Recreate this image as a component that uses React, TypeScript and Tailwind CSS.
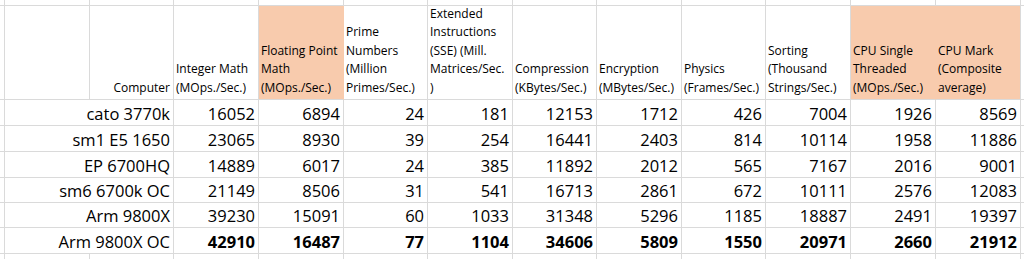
import React from "react";

const headers: { lines: string[]; hl?: boolean }[] = [
  { lines: ["Integer Math", "(MOps./Sec.)"] },
  { lines: ["Floating Point", "Math", "(MOps./Sec.)"], hl: true },
  { lines: ["Prime", "Numbers", "(Million", "Primes/Sec.)"] },
  { lines: ["Extended", "Instructions", "(SSE) (Mill.", "Matrices/Sec.", ")"] },
  { lines: ["Compression", "(KBytes/Sec.)"] },
  { lines: ["Encryption", "(MBytes/Sec.)"] },
  { lines: ["Physics", "(Frames/Sec.)"] },
  { lines: ["Sorting", "(Thousand", "Strings/Sec.)"] },
  { lines: ["CPU Single", "Threaded", "(MOps./Sec.)"], hl: true },
  { lines: ["CPU Mark", "(Composite", "average)"], hl: true },
];

const rows: { name: string; vals: number[]; bold?: boolean }[] = [
  { name: "cato 3770k", vals: [16052, 6894, 24, 181, 12153, 1712, 426, 7004, 1926, 8569] },
  { name: "sm1 E5 1650", vals: [23065, 8930, 39, 254, 16441, 2403, 814, 10114, 1958, 11886] },
  { name: "EP 6700HQ", vals: [14889, 6017, 24, 385, 11892, 2012, 565, 7167, 2016, 9001] },
  { name: "sm6 6700k OC", vals: [21149, 8506, 31, 541, 16713, 2861, 672, 10111, 2576, 12083] },
  { name: "Arm 9800X", vals: [39230, 15091, 60, 1033, 31348, 5296, 1185, 18887, 2491, 19397] },
  { name: "Arm 9800X OC", vals: [42910, 16487, 77, 1104, 34606, 5809, 1550, 20971, 2660, 21912], bold: true },
];

const line = "border-r border-b border-[#dadada]";

export default function App() {
  return (
    <div className="w-[1024px] h-[259px] overflow-hidden bg-white text-black font-['Open_Sans',sans-serif]">
      <div className="grid grid-cols-[5px_85px_84px_85px_85px_84px_85px_84px_85px_84px_85px_85px_85px_3px] grid-rows-[6px_94px_26px_26px_26px_25px_25px_26px_5px]">
        {/* partial row above */}
        {Array.from({ length: 14 }).map((_, i) => (
          <div key={"t" + i} className={i == 13 ? "border-b border-[#dadada]" : line} />
        ))}

        {/* header row */}
        <div className={line} />
        <div className={line} />
        <div className={`${line} flex items-end justify-end pr-[3px] pb-[2px] text-[12px] leading-[18.4px] whitespace-nowrap`}>
          Computer
        </div>
        {headers.map((h, i) => (
          <div
            key={"h" + i}
            className={`${
              h.hl
                ? i == 9
                  ? "bg-[#f8cbad] border-r border-b border-r-[#dadada] border-b-[#dadada]"
                  : "bg-[#f8cbad] border-r border-b border-r-[#f8cbad] border-b-[#dadada]"
                : line
            } flex flex-col justify-end pl-[2px] pb-[2px] text-[12px] leading-[18.4px] whitespace-nowrap`}
          >
            {h.lines.map((l, j) => (
              <span key={j}>{l}</span>
            ))}
          </div>
        ))}
        <div className="border-b border-[#dadada]" />

        {/* data rows */}
        {rows.map((r, ri) => (
          <React.Fragment key={"r" + ri}>
            <div className={line} />
            <div
              className={`${line} col-span-2 flex items-end justify-end pr-[3px] text-[16.5px] leading-[22px] whitespace-nowrap`}
            >
              {r.name}
            </div>
            {r.vals.map((v, vi) => (
              <div
                key={vi}
                className={`${line} flex items-end justify-end pr-[3px] text-[16.5px] leading-[22px] ${
                  r.bold ? "font-bold" : ""
                }`}
              >
                {v}
              </div>
            ))}
            <div className="border-b border-[#dadada]" />
          </React.Fragment>
        ))}

        {/* partial row below */}
        {Array.from({ length: 14 }).map((_, i) => (
          <div key={"b" + i} className={i == 13 ? "" : "border-r border-[#dadada]"} />
        ))}
      </div>
    </div>
  );
}
